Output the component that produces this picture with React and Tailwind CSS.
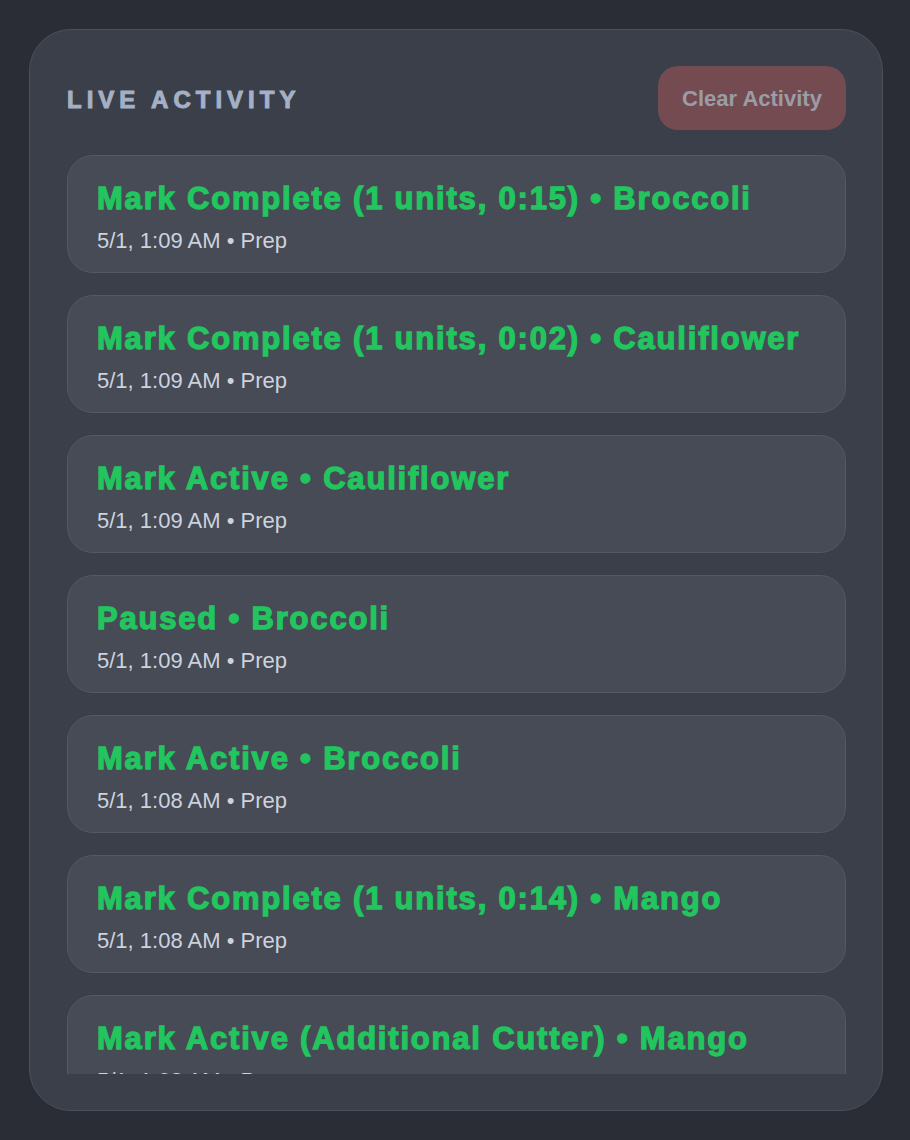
import React from 'react';

const activity = [
  { action: 'Mark Complete (1 units, 0:15)', item: 'Broccoli', time: '5/1, 1:09 AM', station: 'Prep' },
  { action: 'Mark Complete (1 units, 0:02)', item: 'Cauliflower', time: '5/1, 1:09 AM', station: 'Prep' },
  { action: 'Mark Active', item: 'Cauliflower', time: '5/1, 1:09 AM', station: 'Prep' },
  { action: 'Paused', item: 'Broccoli', time: '5/1, 1:09 AM', station: 'Prep' },
  { action: 'Mark Active', item: 'Broccoli', time: '5/1, 1:08 AM', station: 'Prep' },
  { action: 'Mark Complete (1 units, 0:14)', item: 'Mango', time: '5/1, 1:08 AM', station: 'Prep' },
  { action: 'Mark Active (Additional Cutter)', item: 'Mango', time: '5/1, 1:08 AM', station: 'Prep' },
];

const ActivityRow = ({ entry }) => (
  <div className="shrink-0 rounded-[26px] border border-[#525866] bg-[#464b56] px-[29px] pt-[25px] pb-[17px]">
    <div className="whitespace-nowrap text-[31px] leading-[36px] font-bold tracking-[1.8px] text-[#22c55e] [-webkit-text-stroke:1.3px_#22c55e]">
      {entry.action} • {entry.item}
    </div>
    <div className="mt-[10px] text-[22px] leading-[28px] text-[#cdd3de]">
      {entry.time} • {entry.station}
    </div>
  </div>
);

export default function App() {
  return (
    <div className="min-h-screen bg-[#2a2d35] pt-[29px] pl-[29px] pr-[27px] font-['Liberation_Sans',Arial,sans-serif]">
      <div className="flex h-[1082px] flex-col rounded-[42px] border border-[#4b505d] bg-[#3a3f49] pl-[37px] pr-[36px] pt-[36px] pb-[36px]">
        <div className="flex items-center justify-between">
          <h2 className="mt-[3px] text-[24px] font-bold uppercase tracking-[5px] text-[#a4b0c4] [-webkit-text-stroke:1px_#a4b0c4]">
            Live Activity
          </h2>
          <button
            type="button"
            className="h-[64px] w-[188px] rounded-[20px] bg-[#744b51] text-[22px] font-bold text-[#9a9da6]"
          >
            Clear Activity
          </button>
        </div>

        {/* activity feed, scrolls */}
        <div className="mt-[25px] flex min-h-0 flex-1 flex-col gap-[22px] overflow-hidden">
          {activity.map((entry, i) => (
            <ActivityRow key={i} entry={entry} />
          ))}
        </div>
      </div>
    </div>
  );
}
